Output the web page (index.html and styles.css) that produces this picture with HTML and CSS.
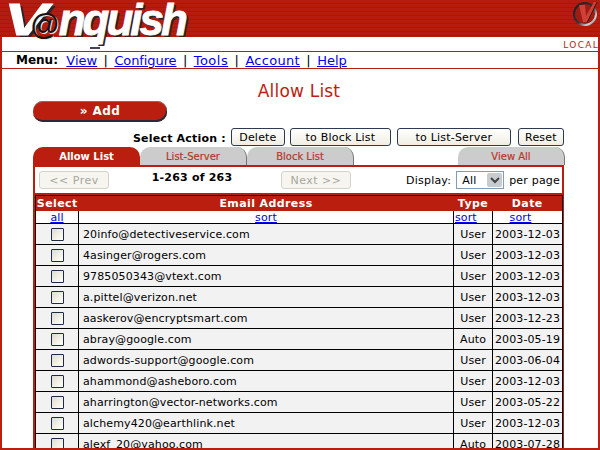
FILE: index.html
```html
<!DOCTYPE html>
<html lang="en">
<head>
<meta charset="utf-8">
<title>Vanquish - Allow List</title>
<link rel="stylesheet" href="styles.css">
</head>
<body>
<div class="page">
  <header class="banner">
    <div class="logo"><span class="logo-big">V</span><span class="logo-at">@</span><span>nquish</span></div>
    <svg class="badge" width="28" height="28" viewBox="0 0 28 28" aria-hidden="true">
      <defs>
        <linearGradient id="ring" x1="0" y1="0" x2="1" y2="1">
          <stop offset="0" stop-color="#1c1c22"/>
          <stop offset=".55" stop-color="#33333a"/>
          <stop offset=".8" stop-color="#d4d4d8"/>
          <stop offset="1" stop-color="#55555c"/>
        </linearGradient>
      </defs>
      <circle cx="14" cy="14" r="11" fill="#a01c12" stroke="url(#ring)" stroke-width="2"/>
      <path d="M8 5h6l1 11 8-14h3l-10 20h-4z" fill="#cf4038"/>
      <path d="M16 23l10-21" stroke="#3a1614" stroke-width="1" fill="none"/>
    </svg>
  </header>
  <div class="frame">
    <div class="local">LOCAL</div>
    <nav class="menu">
      <b class="menu-label">Menu:</b>
      <a href="#">View</a><span>|</span><a class="m-configure" href="#">Configure</a><span>|</span><a class="m-tools" href="#">Tools</a><span>|</span><a class="m-account" href="#">Account</a><span>|</span><a href="#">Help</a>
    </nav>
    <main class="content">
      <h1 class="title">Allow List</h1>
      <div class="add-row"><button class="add" type="button">» Add</button></div>
      <div class="actions">
        <b class="actions-label">Select Action :</b>
        <button class="btn btn-delete" type="button">Delete</button>
        <button class="btn btn-block" type="button">to Block List</button>
        <button class="btn btn-server" type="button">to List-Server</button>
        <button class="btn btn-reset" type="button">Reset</button>
      </div>
      <div class="tabs">
        <div class="tab tab-active">Allow List</div>
        <div class="tab">List-Server</div>
        <div class="tab">Block List</div>
        <div class="tab tab-all">View All</div>
      </div>
      <section class="panel">
        <div class="pager">
          <button class="nav-btn" type="button" disabled>&lt;&lt; Prev</button>
          <b class="count">1-263 of 263</b>
          <button class="nav-btn" type="button" disabled>Next &gt;&gt;</button>
          <div class="display">
            <span>Display:</span>
            <span class="select"><span class="select-val">All</span><span class="select-arrow"><svg width="10" height="7" viewBox="0 0 10 7" aria-hidden="true"><path d="M1 1l4 4 4-4" fill="none" stroke="#444" stroke-width="2"/></svg></span></span>
            <span>per page</span>
          </div>
        </div>
        <table class="list">
          <colgroup><col class="c-sel"><col class="c-mail"><col class="c-type"><col class="c-date"></colgroup>
          <thead>
            <tr class="head"><th>Select</th><th>Email Address</th><th>Type</th><th>Date</th></tr>
            <tr class="sorts"><td><a href="#">all</a></td><td><a href="#">sort</a></td><td class="left"><a href="#">sort</a></td><td class="sort-date"><a href="#">sort</a></td></tr>
          </thead>
          <tbody>
            <tr><td><i class="check"></i></td><td class="mail">20info@detectiveservice.com</td><td>User</td><td>2003-12-03</td></tr>
            <tr><td><i class="check"></i></td><td class="mail">4asinger@rogers.com</td><td>User</td><td>2003-12-03</td></tr>
            <tr><td><i class="check"></i></td><td class="mail">9785050343@vtext.com</td><td>User</td><td>2003-12-03</td></tr>
            <tr><td><i class="check"></i></td><td class="mail">a.pittel@verizon.net</td><td>User</td><td>2003-12-03</td></tr>
            <tr><td><i class="check"></i></td><td class="mail">aaskerov@encryptsmart.com</td><td>User</td><td>2003-12-23</td></tr>
            <tr><td><i class="check"></i></td><td class="mail">abray@google.com</td><td>Auto</td><td>2003-05-19</td></tr>
            <tr><td><i class="check"></i></td><td class="mail">adwords-support@google.com</td><td>User</td><td>2003-06-04</td></tr>
            <tr><td><i class="check"></i></td><td class="mail">ahammond@asheboro.com</td><td>User</td><td>2003-12-03</td></tr>
            <tr><td><i class="check"></i></td><td class="mail">aharrington@vector-networks.com</td><td>User</td><td>2003-05-22</td></tr>
            <tr><td><i class="check"></i></td><td class="mail">alchemy420@earthlink.net</td><td>User</td><td>2003-12-03</td></tr>
            <tr><td><i class="check"></i></td><td class="mail">alexf_20@yahoo.com</td><td>Auto</td><td>2003-07-28</td></tr>
          </tbody>
        </table>
      </section>
    </main>
  </div>
</div>
</body>
</html>
```

FILE: styles.css
```css
* { box-sizing: border-box; }
html, body { margin: 0; padding: 0; background: #fff; }
body { width: 600px; height: 450px; overflow: hidden; font-family: "DejaVu Sans", Verdana, sans-serif; font-size: 11px; color: #000; }
a { color: #00e; }
.page { display: flex; flex-direction: column; height: 450px; }

.banner {
  flex: none; height: 37px; display: flex; justify-content: space-between; align-items: flex-start;
  background: repeating-linear-gradient(to bottom, #b41c10 0, #b41c10 3px, #9e1a12 3px, #9e1a12 4px);
  position: relative; z-index: 1;
}
.logo {
  position: relative;
  font-family: "Liberation Sans", Arial, sans-serif; font-style: italic; font-weight: bold;
  font-size: 44px; line-height: 37px; letter-spacing: -3px; margin: 1px 0 0 4px; color: #fff;
  -webkit-text-stroke: .8px #fff;
  text-shadow: 2px 2px 0 #2c2428;
  white-space: nowrap;
}
.logo::after { content: ""; position: absolute; left: 86px; top: 46px; width: 10px; height: 2px; background: #3c4656; }
.logo-big { display: inline-block; transform: scaleX(1.5); transform-origin: 0 100%; }
.logo-at { position: relative; color: #1a1214; -webkit-text-stroke: 0; text-shadow: 1px 1px 0 #e8e8e8; font-size: 29px; letter-spacing: 0; }
.badge { margin: 0 1px 0 0; }

.frame { flex: 1; min-height: 0; display: flex; flex-direction: column; overflow: hidden; border: 2px solid #ba1e0e; border-top: 0; }
.local { flex: none; height: 14px; line-height: 14px; padding-top: 1px; text-align: right; font-size: 9px; letter-spacing: 1.3px; color: #ba1e0e; margin-right: -1px; }
.menu {
  flex: none; height: 18px; border-top: 1px solid #ba1e0e; border-bottom: 1px solid #ba1e0e;
  display: flex; align-items: center; gap: 6.4px; padding-left: 14px; font-size: 13px; line-height: 15px;
}
.menu-label { margin-right: 2px; font-size: 12px; }
.m-configure { letter-spacing: -.1px; }
.m-tools { letter-spacing: .5px; }
.m-account { letter-spacing: .3px; }

.content { flex: 1; min-height: 0; padding: 0 33px 0 31px; }
.title { margin: 11px 0 0; height: 21px; line-height: 22px; text-align: center; font-size: 17px; letter-spacing: .2px; font-weight: normal; color: #ba1e0e; font-family: "DejaVu Sans", Verdana, sans-serif; }
.add-row { height: 21px; }
.add {
  display: block; width: 134px; height: 21px; margin: 0; padding: 0 0 2px; border: 0; border-radius: 10px;
  background: #ba1e0e; color: #fff; font: bold 12px "DejaVu Sans", Verdana, sans-serif; letter-spacing: .4px;
  box-shadow: inset 0 1px 0 #8a6a64, inset -1px -2px 0 #2a2a3a;
}
.actions { height: 19px; margin-top: 6px; display: flex; align-items: flex-start; }
.actions-label { margin: 4px 5px 0 100px; font-size: 11px; line-height: 14px; letter-spacing: .2px; white-space: nowrap; }
.btn {
  height: 18px; margin: 0; padding: 0; border: 1px solid #2c3a52; border-radius: 3px;
  background: linear-gradient(#fff, #f0eee2); color: #000; font: 11px "DejaVu Sans", Verdana, sans-serif; letter-spacing: .2px;
}
.btn-delete { width: 54px; margin-right: 5px; }
.btn-block { width: 101px; margin-right: 6px; }
.btn-server { width: 114px; margin-right: 7px; }
.btn-reset { width: 46px; }

.tabs { height: 18px; display: flex; width: 532px; }
.tab {
  width: 107px; height: 18px; line-height: 18px; text-align: center; font-size: 10px; color: #b8382c;
  background: #cccccc; border-radius: 10px 10px 0 0; border-right: 1px solid #777; padding-top: 1px; -webkit-text-stroke: .2px #b8382c;
}
.tab-active { background: #ba1e0e; color: #fff; border-right: 0; font-weight: bold; -webkit-text-stroke: 0; }
.tab-all { margin-left: auto; }

.panel { width: 531px; border: 2px solid #ba1e0e; border-bottom: 0; background: #fff; }
.pager { height: 28px; display: flex; align-items: flex-start; padding: 4px 0 0 4px; border-bottom: 2px solid #ba1e0e; }
.nav-btn { width: 70px; height: 18px; padding: 0; border: 1px solid #d4d2c8; border-radius: 3px; background: #f6f5ef; color: #a8a69c; font: 11px "DejaVu Sans", Verdana, sans-serif; letter-spacing: .5px; }
.count { width: 166px; margin-right: 6px; text-align: center; font-size: 11px; line-height: 13px; white-space: nowrap; letter-spacing: .2px; }
.display { margin-left: auto; display: flex; align-items: center; gap: 5px; padding-right: 2px; height: 18px; white-space: nowrap; letter-spacing: .2px; }
.select { display: flex; align-items: center; justify-content: space-between; width: 48px; height: 18px; border: 1px solid #7f9db9; padding: 0 1px 0 5px; }
.select-arrow { width: 15px; height: 14px; background: #c8ccd0; border-radius: 2px; display: flex; align-items: center; justify-content: center; }

.list { width: 527px; table-layout: fixed; border-collapse: collapse; border: 1px solid #000; letter-spacing: .12px; }
.c-sel { width: 43px; } .c-mail { width: 375px; } .c-type { width: 39px; } .c-date { width: 70px; }
.list td { border: 1px solid #000; padding: 0; height: 21px; text-align: center; line-height: 13px; background: #f2f2f2; white-space: nowrap; overflow: hidden; }
.list td.mail { text-align: left; padding-left: 4px; }
.head th { height: 15px; padding: 0; background: #ba1e0e; color: #fff; font-size: 11px; line-height: 13px; letter-spacing: .4px; border: 0; border-top: 1px solid #000; }
.list .sorts td { height: 13px; padding-top: 1px; background: #fff; line-height: 11px; vertical-align: top; border-top: 0; }
.list .sorts td.left { text-align: left; padding-left: 1px; }
.list .sorts td.sort-date { padding-right: 14px; }
.check { display: block; width: 13px; height: 13px; margin: 0 auto; border: 1px solid #1c2a44; border-radius: 1px; background: linear-gradient(135deg, #dcdcd4, #f8f6ea 70%, #fff); }
```
